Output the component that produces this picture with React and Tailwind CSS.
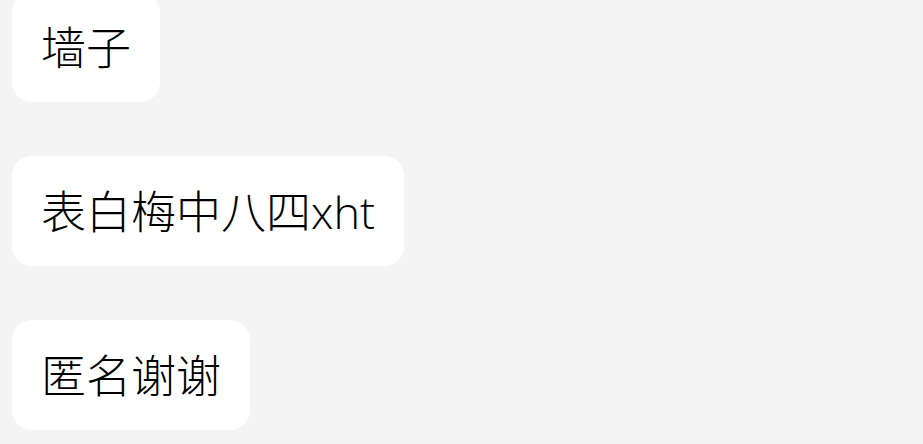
const items = ['墙子', '表白梅中八四xht', '匿名谢谢']

export default function App() {
  return (
    <div className="w-[923px] h-[444px] overflow-hidden bg-[#f4f4f4] font-['Open_Sans','Noto_Sans_CJK_SC',sans-serif]">
      <div className="flex flex-col items-start gap-[54px] pl-3 -mt-2">
        {items.map((text) => (
          <div
            key={text}
            className="bg-white rounded-[20px] px-[29px] h-[110px] flex items-center text-[45px] font-light leading-none text-black"
          >
            {text}
          </div>
        ))}
      </div>
    </div>
  )
}
